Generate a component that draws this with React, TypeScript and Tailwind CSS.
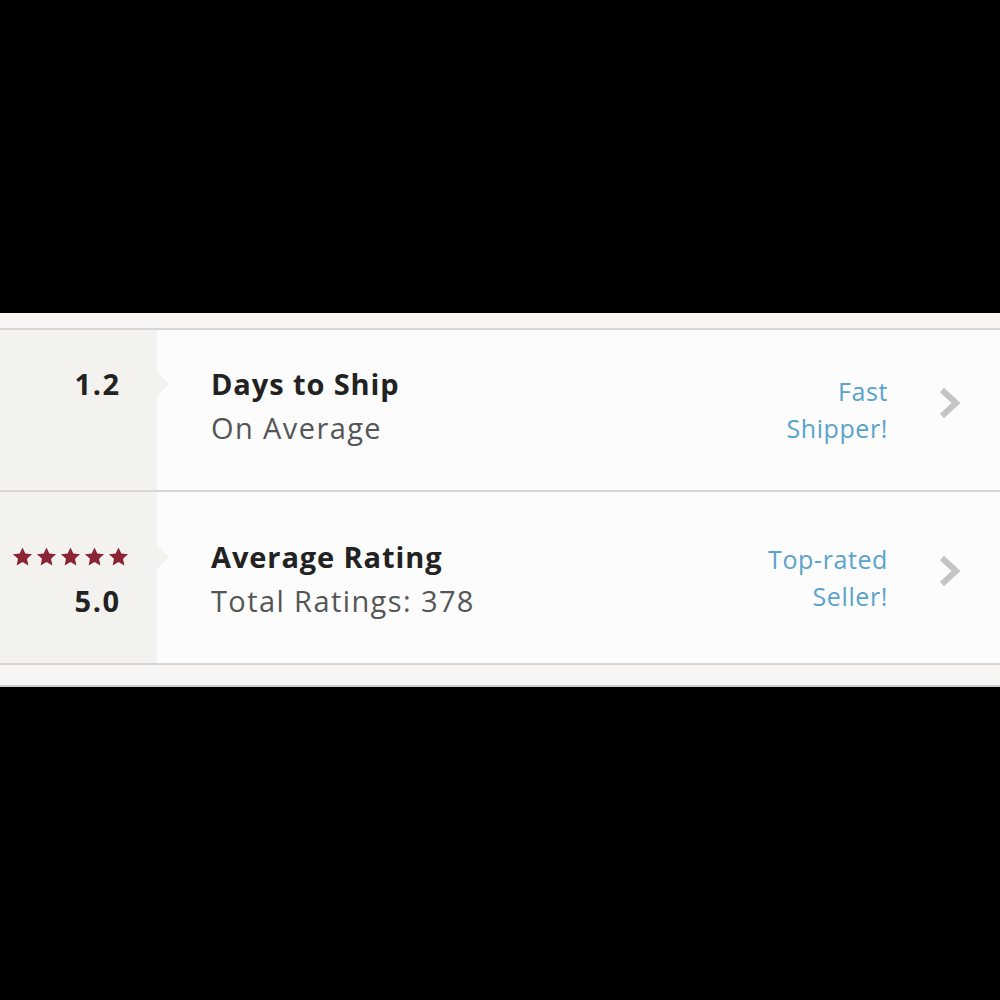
import React from 'react';

const font = { fontFamily: '"Open Sans", Lato, Arial, sans-serif' };

function Stars() {
  return (
    <div className="flex gap-[5px]">
      {[0, 1, 2, 3, 4].map((i) => (
        <svg key={i} width="19" height="19" viewBox="1.5 1.5 21 20">
          <polygon
            points="12,1.5 15.1,8.3 22.5,9.1 17,14.1 18.5,21.4 12,17.7 5.5,21.4 7,14.1 1.5,9.1 8.9,8.3"
            fill="#8a2435"
          />
        </svg>
      ))}
    </div>
  );
}

function Chevron() {
  return (
    <svg width="24" height="34" viewBox="0 0 24 34" className="mb-[14px]">
      <polyline
        points="4,4 18,17 4,30"
        fill="none"
        stroke="#c6c4c2"
        strokeWidth="6"
        strokeLinejoin="miter"
      />
    </svg>
  );
}

interface RowProps {
  height: string;
  shift: string;
  first: React.ReactNode;
  firstPad: string;
  second?: React.ReactNode;
  title: string;
  subtitle: string;
  badge: [string, string];
}

function Row({ height, shift, first, firstPad, second, title, subtitle, badge }: RowProps) {
  return (
    <div className={`flex ${height}`}>
      <div className={`w-[157px] shrink-0 bg-[#f3f2ef] flex flex-col justify-center ${shift}`}>
        <div className={`relative h-[44px] flex items-center justify-end ${firstPad}`}>
          {first}
          <span className="absolute left-full top-1/2 -translate-y-1/2 z-10 w-0 h-0 border-l-[12px] border-l-[#f3f2ef] border-y-[12px] border-y-transparent" />
        </div>
        <div className="h-[44px] flex items-center justify-end pr-[38px]">{second}</div>
      </div>
      <div className="flex-1 bg-[#fcfcfc] flex items-center pl-[54px] pr-[38px]">
        <div className={`flex-1 ${shift}`}>
          <div className="h-[44px] flex items-center text-[29px] tracking-[0.9px] font-bold text-[#222222]">
            {title}
          </div>
          <div className="h-[44px] flex items-center text-[29px] tracking-[1.4px] text-[#555555]">
            {subtitle}
          </div>
        </div>
        <div className="text-right text-[25px] tracking-[0.6px] leading-[37px] text-[#5aa3cc] mr-[50px]">
          <div>{badge[0]}</div>
          <div>{badge[1]}</div>
        </div>
        <Chevron />
      </div>
    </div>
  );
}

function Big({ children }: { children: React.ReactNode }) {
  return <span className="text-[29px] tracking-[1.5px] -mr-[1.5px] font-bold text-[#222222]">{children}</span>;
}

export default function App() {
  return (
    <div className="w-[1000px] h-[1000px] bg-black flex flex-col" style={font}>
      <div className="h-[313px]" />
      <div className="h-[15px] bg-[#f7f6f4]" />
      <div className="h-[2px] bg-[#d9d6d3]" />
      <Row
        height="h-[160px]"
        shift="pb-[9px]"
        first={<Big>1.2</Big>}
        firstPad="pr-[38px]"
        title="Days to Ship"
        subtitle="On Average"
        badge={['Fast', 'Shipper!']}
      />
      <div className="h-[2px] bg-[#d9d6d3]" />
      <Row
        height="h-[171px]"
        shift="pt-[2px]"
        first={<Stars />}
        firstPad="pr-[29px]"
        second={<Big>5.0</Big>}
        title="Average Rating"
        subtitle="Total Ratings: 378"
        badge={['Top-rated', 'Seller!']}
      />
      <div className="h-[2px] bg-[#d9d6d3]" />
      <div className="h-[20px] bg-[#f7f6f3]" />
      <div className="h-[2px] bg-[#d2d0ce]" />
    </div>
  );
}
